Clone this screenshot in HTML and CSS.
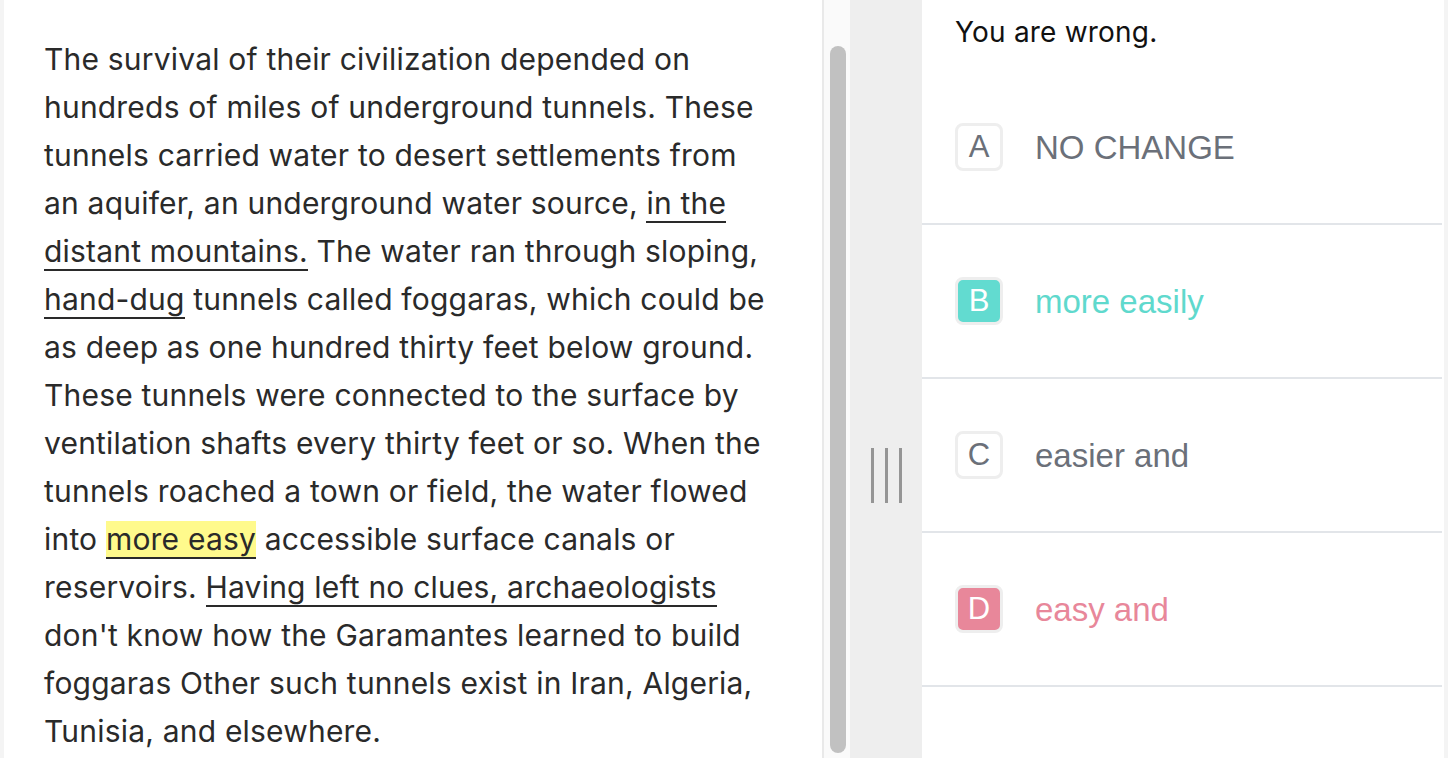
FILE: index.html
```html
<!DOCTYPE html>
<html>
<head>
<meta charset="utf-8">
<link rel="stylesheet" href="styles.css">
</head>
<body>
<div class="app">
  <section class="passage-pane">
    <div class="passage">
      <div class="passage-inner">
        <p class="para prev">in this arid dry land. They farmed the soil.</p>
        <p class="para">The survival of their civilization depended on hundreds of miles of underground tunnels. These tunnels carried water to desert settlements from an aquifer, an underground water source, <span class="ul">in the distant mountains.</span> The water ran through sloping, <span class="ul">hand-dug</span> tunnels called foggaras, which could be as deep as one hundred thirty feet below ground. These tunnels were connected to the surface by ventilation shafts every thirty feet or so. When the tunnels roached a town or field, the water flowed into <span class="ul hl">more easy</span> accessible surface canals or reservoirs. <span class="ul">Having left no clues, archaeologists</span> don't know how the Garamantes learned to build foggaras Other such tunnels exist in Iran, Algeria, Tunisia, and elsewhere.</p>
      </div>
    </div>
    <div class="scrolltrack"><div class="thumb"></div></div>
  </section>
  <div class="divider">
    <span class="grip"></span><span class="grip"></span><span class="grip"></span>
  </div>
  <section class="answer-pane">
    <div class="feedback">You are wrong.</div>
    <ul class="options">
      <li class="option"><span class="key">A</span><span class="label">NO CHANGE</span></li>
      <li class="option correct"><span class="key">B</span><span class="label">more easily</span></li>
      <li class="option"><span class="key">C</span><span class="label">easier and</span></li>
      <li class="option wrong"><span class="key">D</span><span class="label">easy and</span></li>
    </ul>
  </section>
  <div class="rtrack"></div>
</div>
</body>
</html>
```

FILE: styles.css
```css
html, body {
  margin: 0;
  padding: 0;
}
body {
  background: #f4f4f4;
  font-family: Inter, "Noto Sans", sans-serif;
}
.app {
  display: flex;
  height: 758px;
  overflow: hidden;
  padding-left: 4px;
}
.passage-pane {
  width: 846px;
  flex: none;
  display: flex;
  background: #fff;
}
.passage {
  flex: 1;
  overflow: hidden;
  padding: 0 44px 0 40px;
}
.passage-inner {
  margin-top: -42px;
}
.para {
  margin: 0 0 29px;
  font-size: 30px;
  letter-spacing: 0.2px;
  line-height: 48px;
  color: #2a2a2a;
}
.prev {
  white-space: nowrap;
}
.ul {
  border-bottom: 2px solid #2a2a2a;
}
.hl {
  background: #fffa8c;
}
.scrolltrack {
  width: 28px;
  flex: none;
  border-left: 2px solid #e9e9e9;
  background: #fafafa;
  padding: 46px 0 0 6px;
  box-sizing: border-box;
}
.thumb {
  width: 16px;
  height: 707px;
  border-radius: 8px;
  background: #c1c1c1;
}
.divider {
  width: 72px;
  flex: none;
  background: #eeeeee;
  display: flex;
  justify-content: center;
  align-items: flex-start;
  padding-top: 448px;
  box-sizing: border-box;
  gap: 11px;
}
.grip {
  width: 3px;
  height: 55px;
  background: #959595;
}
.answer-pane {
  width: 522px;
  flex: none;
  background: #fff;
}
.feedback {
  height: 71px;
  box-sizing: border-box;
  padding: 14px 0 0 33px;
  font-size: 28px;
  letter-spacing: 0.2px;
  line-height: 36px;
  color: #111;
}
.options {
  list-style: none;
  margin: 0 2px 0 0;
  padding: 0;
}
.option {
  height: 154px;
  box-sizing: border-box;
  border-bottom: 2px solid #e2e5e9;
  display: flex;
  align-items: center;
  padding-left: 33px;
  gap: 32px;
  font-family: "Liberation Sans", Arial, sans-serif;
  color: #6b7079;
}
.key {
  width: 48px;
  height: 48px;
  box-sizing: border-box;
  border: 3px solid #eeeeee;
  border-radius: 8px;
  display: flex;
  align-items: center;
  justify-content: center;
  font-size: 31px;
  background: #fff;
}
.label {
  font-size: 33px;
  padding-top: 2px;
}
.correct { color: #5fd9cd; }
.correct .key { background: #62dbd0; color: #fff; }
.wrong { color: #e8879a; }
.wrong .key { background: #e8879a; color: #fff; }
.rtrack {
  width: 4px;
  flex: none;
  background: #f4f4f4;
}
```
